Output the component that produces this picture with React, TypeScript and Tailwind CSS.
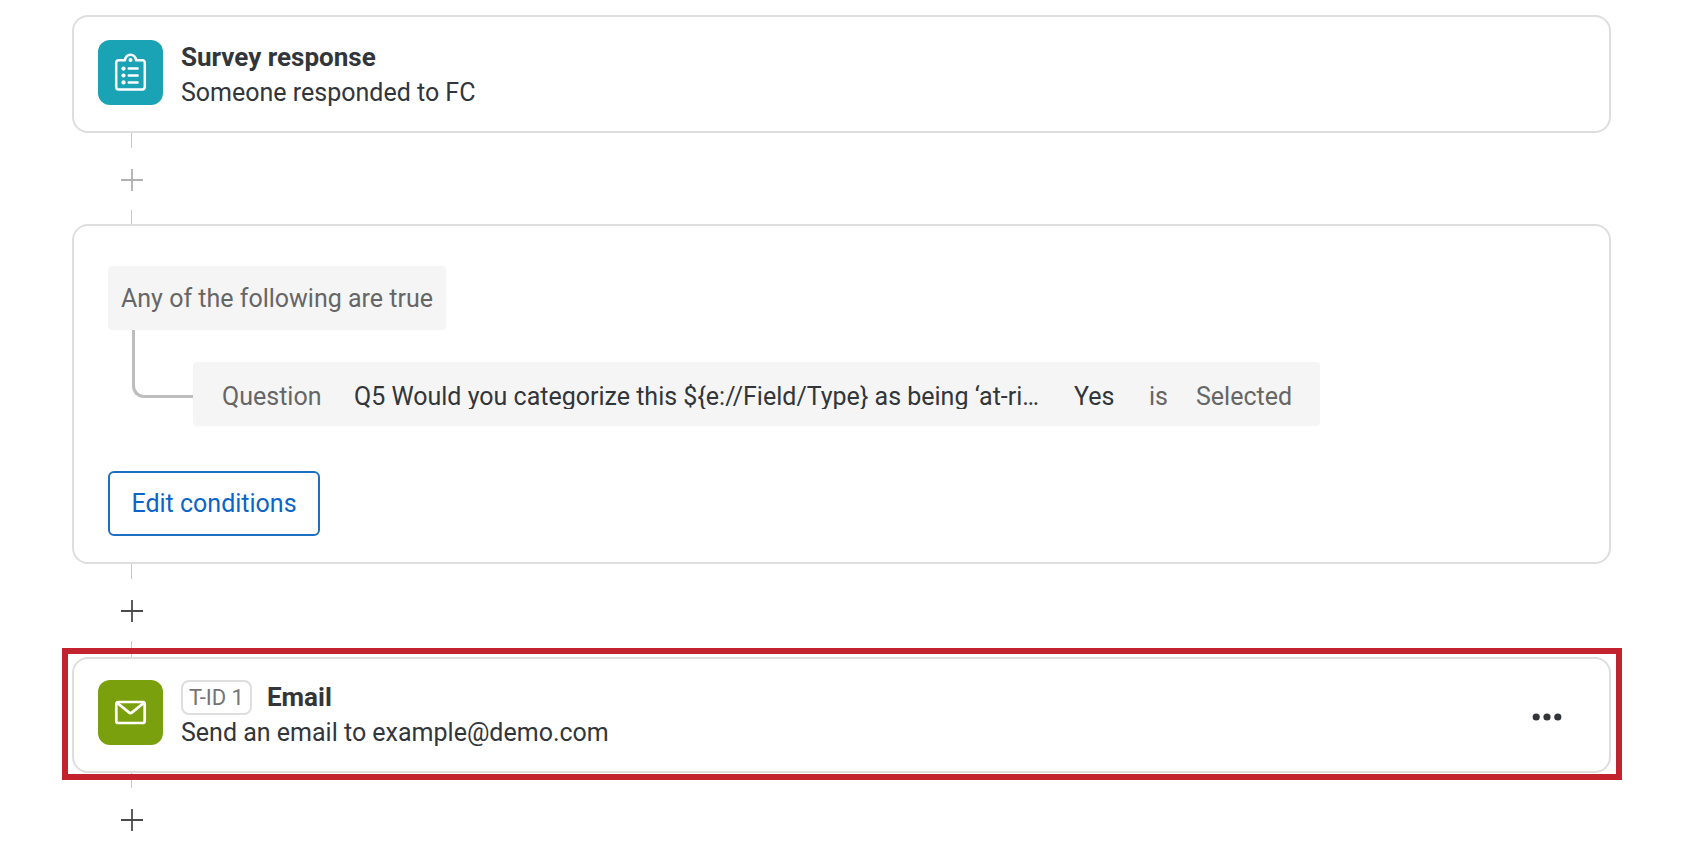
import type { ReactNode } from "react";

function PlusIcon() {
  return (
    <svg width="22" height="22" viewBox="0 0 22 22" fill="none" stroke="currentColor" strokeWidth="1.8" aria-hidden="true">
      <path d="M11 0v22M0 11h22" />
    </svg>
  );
}

function ClipboardIcon() {
  return (
    <svg width="33" height="39" viewBox="0 0 33 39" fill="none" stroke="currentColor" strokeWidth="2.5" strokeLinecap="round" strokeLinejoin="round" aria-hidden="true">
      <path d="M11 7.200H4.600A2.400 2.400 0 0 0 2.200 9.600v24.500a2.400 2.400 0 0 0 2.400 2.400h23.800a2.400 2.400 0 0 0 2.400-2.400V9.600a2.400 2.400 0 0 0-2.400-2.400H22a5.500 5.500 0 0 0-11 0Z" />
      <path d="M14.800 15.600h8.800M14.800 22.500h8.800M14.800 29.400h8.800" />
      <g fill="currentColor" stroke="none">
        <circle cx="16.500" cy="7" r="2" />
        <circle cx="9.500" cy="15.600" r="2.100" />
        <circle cx="9.500" cy="22.500" r="2.100" />
        <circle cx="9.500" cy="29.400" r="2.100" />
      </g>
    </svg>
  );
}

function EnvelopeIcon() {
  return (
    <svg width="33" height="25" viewBox="0 0 33 25" fill="none" stroke="currentColor" strokeWidth="2.7" strokeLinecap="round" strokeLinejoin="round" aria-hidden="true">
      <rect x="2.300" y="2" width="28.400" height="21" rx="2" />
      <path d="M3 2.800 14.900 12.400a2.500 2.500 0 0 0 3.200 0L30 2.800" />
    </svg>
  );
}

function AddStep({ muted = false, last = false, height }: { muted?: boolean; last?: boolean; height: string }) {
  return (
    <div className={`ml-10 flex w-10 flex-col ${height}`}>
      <span className="ml-[19px] h-[15px] w-px bg-[#c8c8c8]" />
      <button
        type="button"
        aria-label="Add step"
        disabled={muted}
        className={`flex h-[62px] w-10 items-center justify-center pt-0.5 ${muted ? "text-[#b0b0b0]" : "text-[#4a4a4a]"}`}
      >
        <PlusIcon />
      </button>
      {!last && <span className="ml-[19px] w-px flex-1 bg-[#c8c8c8]" />}
    </div>
  );
}

function StepCard({
  icon,
  iconClass,
  badge,
  title,
  text,
  className,
  children,
}: {
  icon: ReactNode;
  iconClass: string;
  badge?: string;
  title: string;
  text: string;
  className: string;
  children?: ReactNode;
}) {
  return (
    <section className={`flex items-start rounded-2xl border-2 border-[#dedede] bg-white pr-[42px] pl-6 ${className}`}>
      <div className={`mt-px flex size-[65px] shrink-0 items-center justify-center rounded-xl text-white ${iconClass}`}>{icon}</div>
      <div className="ml-[18px] flex-1">
        <div className="flex h-9 items-center gap-[15px]">
          {badge && (
            <span className="h-[35px] rounded-lg border-2 border-[#dedede] px-[6px] text-[22px] leading-[31px] text-[#757575]">{badge}</span>
          )}
          <h2 className="text-[26px] leading-9 font-bold">{title}</h2>
        </div>
        <p className="leading-9">{text}</p>
      </div>
      {children}
    </section>
  );
}

export default function App() {
  return (
    <main className="bg-white pt-[15px] pr-[89px] pl-[72px] font-[Roboto,'Liberation_Sans',sans-serif] text-[25px] text-[#32363a]">
      <StepCard
        icon={<ClipboardIcon />}
        iconClass="bg-[#19a3b5]"
        title="Survey response"
        text="Someone responded to FC"
        className="pt-[22px] pb-5"
      />

      <AddStep muted height="h-[91px]" />

      <section className="rounded-2xl border-2 border-[#dedede] bg-white pt-10 pb-[26px] pl-[34px]">
        <div className="inline-block h-16 rounded bg-[#f5f5f5] px-[13px] pt-px leading-[64px] text-[#666666]">Any of the following are true</div>
        <div className="flex pl-6">
          <span className="h-[68px] w-[61px] shrink-0 rounded-bl-xl border-b-[3px] border-l-[3px] border-[#bdbdbd]" />
          <div className="mt-8 flex h-16 items-center rounded bg-[#f5f5f5] pt-1 pr-7 pl-[29px] leading-[25px] whitespace-nowrap text-[#666666]">
            <span className="w-[132px]">Question</span>
            <span className="w-[720px] overflow-hidden text-[#32363a]">Q5 Would you categorize this ${"{"}e://Field/Type{"}"} as being ‘at-ri…</span>
            <span className="w-[75px] text-[#32363a]">Yes</span>
            <span className="w-[47px]">is</span>
            <span>Selected</span>
          </div>
        </div>
        <button type="button" className="mt-[45px] block h-[65px] w-[212px] rounded-md border-2 border-[#1d6fc4] pt-px text-[#0b64c8]">
          Edit conditions
        </button>
      </section>

      <AddStep height="h-[93px]" />

      <div className="relative">
        <StepCard
          icon={<EnvelopeIcon />}
          iconClass="bg-[#7ba00d]"
          badge="T-ID 1"
          title="Email"
          text="Send an email to example@demo.com"
          className="pt-5 pb-5"
        >
          <button type="button" aria-label="More options" className="mt-[18px] flex size-10 items-center justify-center text-[#32363a]">
            <svg width="30" height="8" viewBox="0 0 30 8" fill="currentColor" aria-hidden="true">
              <circle cx="4.200" cy="4" r="3.600" />
              <circle cx="15" cy="4" r="3.600" />
              <circle cx="25.800" cy="4" r="3.600" />
            </svg>
          </button>
        </StepCard>
        <div className="pointer-events-none absolute -top-[9px] -right-[11px] -bottom-[7px] -left-[10px] border-6 border-[#c3232f]" />
      </div>

      <AddStep last height="h-[77px]" />
    </main>
  );
}
